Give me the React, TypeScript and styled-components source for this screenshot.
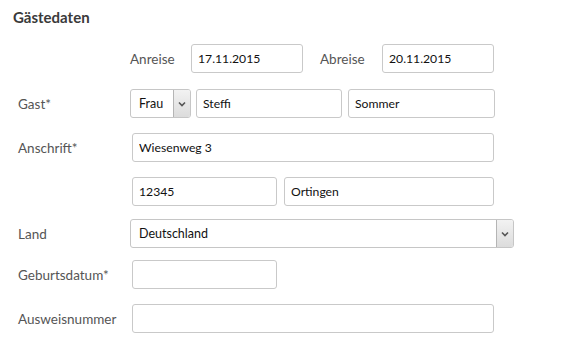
import React from "react";
import styled, { createGlobalStyle } from "styled-components";

//~~~~~~~~~~~~~~~~~~~Global
const GlobalStyle = createGlobalStyle`
  html, body {
    margin: 0;
    padding: 0;
    background: #fff;
  }
  body {
    font-family: Lato, "Open Sans", Arial, sans-serif;
    font-size: 13px;
    color: #222;
  }
`;

//~~~~~~~~~~~~~~~~~~~Styled Components
const Wrapper = styled.form`
  width: 580px;
  height: 341px;
  padding: 9px 0 0 0;
  box-sizing: border-box;
  display: flex;
  flex-direction: column;
`;

const Title = styled.h2`
  margin: 0 0 0 13px;
  font-size: 15px;
  font-weight: 700;
  color: #3a3a3a;
  line-height: 16px;
`;

const Row = styled.div<{ $top: number }>`
  display: flex;
  align-items: center;
  height: 29px;
  margin-top: ${({ $top }) => $top}px;
`;

const Label = styled.label`
  width: 112px;
  padding-left: 18px;
  flex-shrink: 0;
  color: #555;
  font-size: 13.5px;
`;

const InlineLabel = styled.label<{ $width: number; $left?: number }>`
  width: ${({ $width }) => $width}px;
  margin-left: ${({ $left }) => $left ?? 0}px;
  flex-shrink: 0;
  color: #555;
  font-size: 13.5px;
`;

const Field = styled.input<{ $width: number; $left?: number }>`
  width: ${({ $width }) => $width}px;
  margin-left: ${({ $left }) => $left ?? 0}px;
  height: 29px;
  box-sizing: border-box;
  border: 1px solid #c9c9c9;
  border-radius: 3px;
  padding: 0 6px;
  font-family: inherit;
  font-size: 12.2px;
  color: #111;
  background: #fff;
  outline: none;
`;

const SelectBox = styled.div<{ $width: number; $left?: number }>`
  width: ${({ $width }) => $width}px;
  margin-left: ${({ $left }) => $left ?? 0}px;
  height: 29px;
  box-sizing: border-box;
  border: 1px solid #c6c6c6;
  border-radius: 3px;
  display: flex;
  align-items: stretch;
  overflow: hidden;
  background: #fff;
`;

const SelectValue = styled.span`
  flex: 1;
  display: flex;
  align-items: center;
  padding-left: 8px;
  font-size: 12.5px;
  color: #111;
`;

const ArrowBox = styled.span`
  width: 16px;
  border-left: 1px solid #b5b5b5;
  background: linear-gradient(#f2f2f2, #dcdcdc);
  display: flex;
  align-items: center;
  justify-content: center;
  & > svg {
    width: 8px;
    height: 6px;
  }
`;

//~~~~~~~~~~~~~~~~~~~Parts
const Chevron = () => (
  <svg viewBox="0 0 8 6">
    <path d="M1 1.5 L4 4.5 L7 1.5" fill="none" stroke="#555" strokeWidth="1.6" />
  </svg>
);

const Select = ({
  value,
  width,
  left,
}: {
  value: string;
  width: number;
  left?: number;
}) => (
  <SelectBox $width={width} $left={left}>
    <SelectValue>{value}</SelectValue>
    <ArrowBox>
      <Chevron />
    </ArrowBox>
  </SelectBox>
);

//~~~~~~~~~~~~~~~~~~~Component
const App = (): JSX.Element => {
  return (
    <>
      <GlobalStyle />
      <Wrapper>
        <Title>Gästedaten</Title>
        <Row $top={19}>
          <InlineLabel $width={61} $left={130}>
            Anreise
          </InlineLabel>
          <Field $width={112} value="17.11.2015" readOnly />
          <InlineLabel $width={62} $left={17}>
            Abreise
          </InlineLabel>
          <Field $width={112} value="20.11.2015" readOnly />
        </Row>
        <Row $top={16}>
          <Label>Gast*</Label>
          <Select value="Frau" width={61} />
          <Field $width={146} $left={5} value="Steffi" readOnly />
          <Field $width={147} $left={6} value="Sommer" readOnly />
        </Row>
        <Row $top={15}>
          <Label>Anschrift*</Label>
          <Field $width={362} $left={2} value="Wiesenweg 3" readOnly />
        </Row>
        <Row $top={15}>
          <Label />
          <Field $width={145} $left={2} value="12345" readOnly />
          <Field $width={210} $left={7} value="Ortingen" readOnly />
        </Row>
        <Row $top={13}>
          <Label>Land</Label>
          <Select value="Deutschland" width={384} />
        </Row>
        <Row $top={12}>
          <Label>Geburtsdatum*</Label>
          <Field $width={145} $left={2} value="" readOnly />
        </Row>
        <Row $top={15}>
          <Label>Ausweisnummer</Label>
          <Field $width={362} $left={2} value="" readOnly />
        </Row>
      </Wrapper>
    </>
  );
};

export default App;
